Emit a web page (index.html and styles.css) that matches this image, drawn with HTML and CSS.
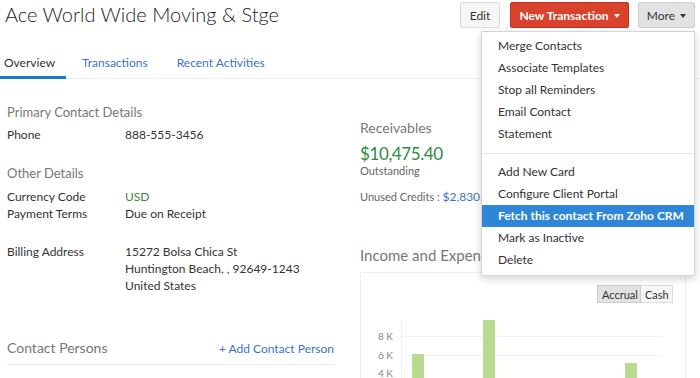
FILE: index.html
```html
<html>
<head>
  <title>Ace World Wide Moving &amp; Stge</title>
  <link rel="stylesheet" href="styles.css">
</head>
<body>
  <div class="page">
    <div class="top">
      <h1>Ace World Wide Moving &amp; Stge</h1>
      <div class="actions">
        <button class="btn btn-edit">Edit</button>
        <button class="btn btn-red">New Transaction <span class="caret"></span></button>
        <button class="btn btn-more">More <span class="caret dark"></span></button>
      </div>
    </div>

    <div class="tabs">
      <a class="tab active">Overview</a>
      <a class="tab">Transactions</a>
      <a class="tab">Recent Activities</a>
    </div>

    <div class="content">
      <div class="left">
        <h3 class="first">Primary Contact Details</h3>
        <div class="row"><span class="label">Phone</span><span>888-555-3456</span></div>

        <h3 class="gap">Other Details</h3>
        <div class="row first-row"><span class="label">Currency Code</span><span class="green">USD</span></div>
        <div class="row tight"><span class="label">Payment Terms</span><span>Due on Receipt</span></div>

        <div class="row address"><span class="label">Billing Address</span>
          <span>15272 Bolsa Chica St<br>Huntington Beach, , 92649-1243<br>United States</span></div>

        <div class="persons">
          <h3>Contact Persons</h3>
          <a class="link">+ Add Contact Person</a>
        </div>
      </div>

      <div class="right">
        <h3 class="first">Receivables</h3>
        <div class="amount">$10,475.40</div>
        <div class="small">Outstanding</div>
        <div class="small credits">Unused Credits : <span class="blue">$2,830.00</span></div>

        <h3 class="income">Income and Expense</h3>
        <div class="chart">
          <div class="toggle"><span class="on">Accrual</span><span>Cash</span></div>
          <svg width="324" height="80" viewBox="0 0 324 80">
            <line x1="40" y1="33.5" x2="301" y2="33.5" stroke="#f1f1f1"/>
            <line x1="40" y1="52.5" x2="301" y2="52.5" stroke="#f1f1f1"/>
            <line x1="40.5" y1="18" x2="40.5" y2="80" stroke="#eeeeee"/>
            <text x="17" y="37" class="axis">8 K</text>
            <text x="17" y="56" class="axis">6 K</text>
            <text x="17" y="74" class="axis">4 K</text>
            <rect x="51" y="51" width="12" height="30" fill="#b9da90"/>
            <rect x="122" y="17" width="12" height="64" fill="#b9da90"/>
            <rect x="264" y="60" width="12" height="21" fill="#b9da90"/>
          </svg>
        </div>
      </div>
    </div>
  </div>

  <ul class="menu">
    <li>Merge Contacts</li>
    <li>Associate Templates</li>
    <li>Stop all Reminders</li>
    <li>Email Contact</li>
    <li>Statement</li>
    <li class="divider"></li>
    <li>Add New Card</li>
    <li>Configure Client Portal</li>
    <li class="hover">Fetch this contact From Zoho CRM</li>
    <li>Mark as Inactive</li>
    <li>Delete</li>
  </ul>
</body>
</html>
```

FILE: styles.css
```css
* {
  margin: 0;
  padding: 0;
  box-sizing: border-box;
}

body {
  font-family: Lato, "Noto Sans", sans-serif;
  color: #333;
  background: #fff;
  font-size: 12px;
  overflow: hidden;
}

.top {
  display: flex;
  justify-content: space-between;
  align-items: flex-start;
  padding: 2px 5px 0 5px;
  height: 43px;
}

.top h1 {
  font-size: 20px;
  font-weight: 300;
  color: #222;
  line-height: 22px;
  margin-top: 1px;
}

.actions {
  display: flex;
  gap: 10px;
}

.btn {
  font-family: inherit;
  font-size: 12px;
  height: 26px;
  padding: 0;
  border: 1px solid #dcdcdc;
  background: #f6f6f6;
  color: #333;
  border-radius: 2px;
  white-space: nowrap;
}

.btn-edit {
  width: 40px;
}

.btn-red {
  background: #d9432e;
  border-color: #c23120;
  color: #fff;
  font-weight: bold;
  width: 119px;
}

.btn-more {
  background: #e2e2e2;
  border-color: #cfcfcf;
  width: 57px;
  margin-left: -1px;
}

.caret {
  display: inline-block;
  width: 0;
  height: 0;
  border-left: 3px solid transparent;
  border-right: 3px solid transparent;
  border-top: 4px solid #fff;
  vertical-align: middle;
  margin-left: 2px;
}

.caret.dark {
  border-top-color: #333;
}

.tabs {
  display: flex;
  border-bottom: 1px solid #ececec;
  height: 36px;
}

.tab {
  font-size: 12px;
  color: #3b73c8;
  padding-top: 12px;
  margin-right: 29px;
}

.tab.active {
  color: #333;
  border-bottom: 3px solid #1b78d2;
  padding-left: 4px;
  width: 66px;
  margin-right: 16px;
  margin-bottom: -1px;
}

.content {
  display: grid;
  grid-template-columns: 327px 326px;
  column-gap: 26px;
  padding-left: 7px;
}

h3 {
  font-size: 13px;
  font-weight: normal;
  color: #777;
  line-height: 18px;
}

.left h3.first {
  margin-top: 24px;
}

.row {
  display: flex;
  line-height: 17px;
  margin-top: 5px;
}

.row .label {
  width: 118px;
  flex: none;
}

h3.gap {
  margin-top: 21px;
}

.row.first-row {
  margin-top: 6px;
}

.row.tight {
  margin-top: 0;
}

.row.address {
  margin-top: 21px;
}

.green {
  color: #3c8a3a;
}

.persons {
  display: flex;
  justify-content: space-between;
  align-items: center;
  margin-top: 45px;
  padding-bottom: 7px;
  border-bottom: 1px solid #ececec;
}

.persons h3 {
  font-size: 14px;
}

.link {
  color: #3b73c8;
}

.right h3 {
  font-size: 14px;
}

.right h3.first {
  margin-top: 40px;
}

.amount {
  font-size: 17px;
  letter-spacing: -0.4px;
  color: #2e8b3c;
  margin-top: 6px;
  line-height: 21px;
}

.small {
  font-size: 11px;
  color: #666;
  line-height: 14px;
}

.credits {
  margin-top: 12px;
}

.blue {
  color: #3b73c8;
  font-size: 12px;
}

.right h3.income {
  margin-top: 42px;
  font-size: 15px;
}

.chart {
  margin-top: 8px;
  border: 1px solid #eeeeee;
  height: 120px;
  padding-top: 12px;
}

.toggle {
  display: flex;
  justify-content: flex-end;
  margin-right: 12px;
}

.toggle span {
  display: flex;
  align-items: center;
  font-size: 11px;
  border: 1px solid #dcdcdc;
  background: #f7f7f7;
  padding: 0 4px;
  height: 18px;
}

.toggle span.on {
  background: #e2e2e2;
  border-color: #cccccc;
  width: 44px;
}

.toggle span:last-child {
  width: 32px;
  border-left: none;
}

.chart svg {
  display: block;
}

.axis {
  font-size: 10px;
  fill: #888;
}

.menu {
  position: absolute;
  left: 481px;
  top: 31px;
  width: 214px;
  list-style: none;
  background: #fff;
  border: 1px solid #d4d4d4;
  box-shadow: 0 3px 8px rgba(0, 0, 0, 0.18);
  padding: 3px 0 4px;
}

.menu li {
  height: 22px;
  line-height: 22px;
  padding-left: 16px;
  font-size: 12px;
  color: #333;
  white-space: nowrap;
}

.menu li.divider {
  height: 1px;
  margin: 8px 0 7px;
  background: #e5e5e5;
}

.menu li.hover {
  background: #2f86d6;
  color: #fff;
  font-weight: bold;
}
```
